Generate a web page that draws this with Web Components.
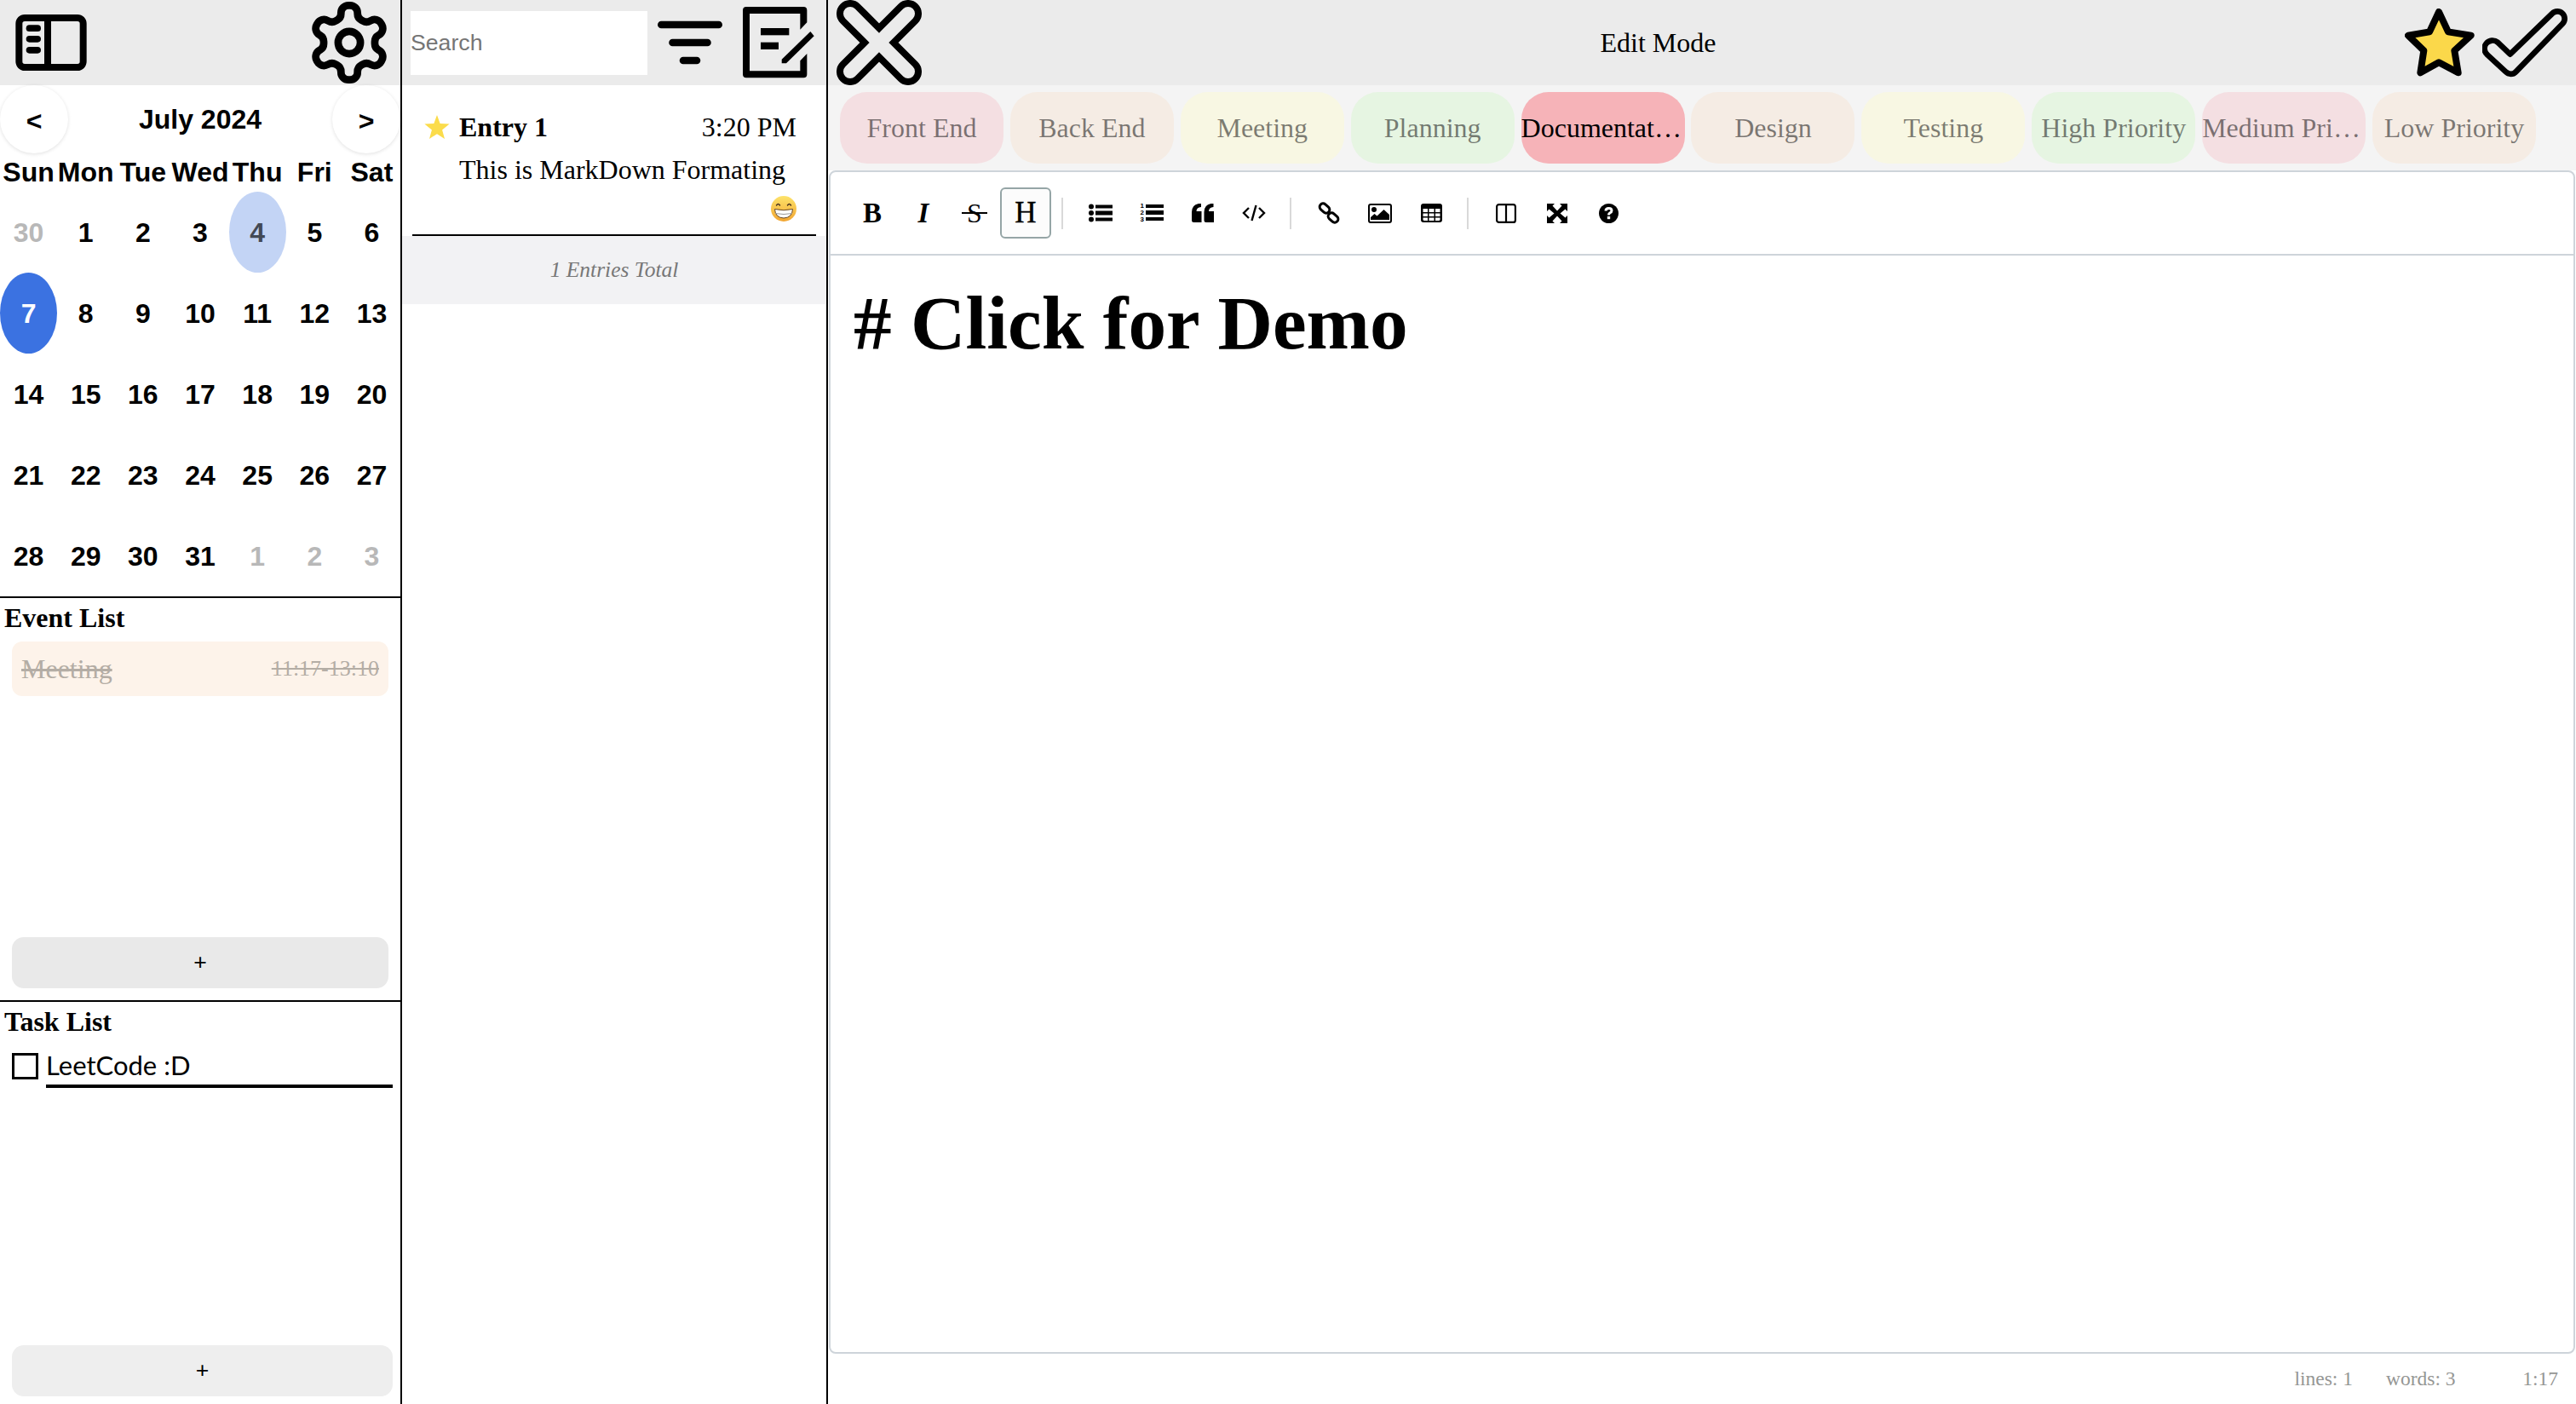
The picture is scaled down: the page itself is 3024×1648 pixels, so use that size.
<!DOCTYPE html>
<html>
<head>
<meta charset="utf-8">
<title>Journal</title>
<style>
  html, body { margin: 0; height: 100%; background: #fff; overflow: hidden; }
  body { font-family: "Liberation Serif", serif; font-size: 32px; color: #000; }
</style>
</head>
<body>
<app-shell>
  <left-panel slot="left">
    <cal-month></cal-month>
    <list-section slot="events" title-text="Event List" btn-width="442" btn-bg="#e9e9e9" btn-bottom="14">
      <event-row time="11:17-13:10">Meeting</event-row>
    </list-section>
    <list-section slot="tasks" title-text="Task List" btn-width="447" btn-bg="#eeeeee" btn-bottom="9">
      <task-row>LeetCode :D</task-row>
    </list-section>
  </left-panel>
  <entry-panel slot="mid">
    <entry-card name="Entry 1" time="3:20 PM">This is MarkDown Formating</entry-card>
  </entry-panel>
  <edit-panel slot="main"></edit-panel>
</app-shell>

<script>
function define(name, html, extra) {
  const template = document.createElement("template");
  template.innerHTML = html;
  class El extends HTMLElement {
    constructor() {
      super();
      this.attachShadow({ mode: "open" });
      this.shadowRoot.appendChild(template.content.cloneNode(true));
    }
    connectedCallback() {
      if (extra) extra(this, this.shadowRoot);
    }
  }
  customElements.define(name, El);
}

const sans = '"Liberation Sans", Arial, sans-serif';
const serif = '"Liberation Serif", serif';

define("app-shell", `
  <style>
    :host { display: grid; grid-template-columns: 472px 500px 1fr; height: 1648px; }
    ::slotted(*) { min-width: 0; }
  </style>
  <slot name="left"></slot><slot name="mid"></slot><slot name="main"></slot>
`);

define("left-panel", `
  <style>
    :host { display: flex; flex-direction: column; height: 1648px; border-right: 2px solid #000; box-sizing: border-box; }
    header { height: 100px; flex: none; background: #ebebeb; display: flex; justify-content: space-between; align-items: center; padding: 0 12px 0 18px; }
    svg { display: block; }
    .events { display: flex; height: 474px; flex: none; border-bottom: 2px solid #000; box-sizing: border-box; }
    .tasks { display: flex; flex: 1; min-height: 0; }
    ::slotted(list-section) { flex: 1; }
  </style>
  <header>
    <svg width="84" height="66" viewBox="55 50 250 198">
      <rect x="67" y="62" width="226" height="174" rx="20" fill="none" stroke="#000" stroke-width="24"/>
      <rect x="156" y="62" width="24" height="174" fill="#000"/>
      <rect x="92" y="87" width="52" height="23" rx="11.5"/>
      <rect x="92" y="125" width="52" height="23" rx="11.5"/>
      <rect x="92" y="164" width="52" height="23" rx="11.5"/>
    </svg>
    <svg width="96" height="96" viewBox="1 1 22 22" fill="none" stroke="#000" stroke-width="2" stroke-linecap="round" stroke-linejoin="round">
      <path d="M12.22 2h-.44a2 2 0 0 0-2 2v.18a2 2 0 0 1-1 1.73l-.43.25a2 2 0 0 1-2 0l-.15-.08a2 2 0 0 0-2.73.73l-.22.38a2 2 0 0 0 .73 2.73l.15.1a2 2 0 0 1 1 1.72v.51a2 2 0 0 1-1 1.74l-.15.09a2 2 0 0 0-.73 2.73l.22.38a2 2 0 0 0 2.73.73l.15-.08a2 2 0 0 1 2 0l.43.25a2 2 0 0 1 1 1.73V20a2 2 0 0 0 2 2h.44a2 2 0 0 0 2-2v-.18a2 2 0 0 1 1-1.73l.43-.25a2 2 0 0 1 2 0l.15.08a2 2 0 0 0 2.73-.73l.22-.39a2 2 0 0 0-.73-2.73l-.15-.08a2 2 0 0 1-1-1.74v-.5a2 2 0 0 1 1-1.74l.15-.09a2 2 0 0 0 .73-2.73l-.22-.38a2 2 0 0 0-2.73-.73l-.15.08a2 2 0 0 1-2 0l-.43-.25a2 2 0 0 1-1-1.73V4a2 2 0 0 0-2-2z"/>
      <circle cx="12" cy="12" r="3"/>
    </svg>
  </header>
  <slot></slot>
  <div class="events"><slot name="events"></slot></div>
  <div class="tasks"><slot name="tasks"></slot></div>
`);

define("cal-month", `
  <style>
    :host { display: block; height: 602px; flex: none; box-sizing: border-box; border-bottom: 2px solid #000; font: bold 32px ${sans}; }
    .nav { height: 80px; display: flex; justify-content: space-between; align-items: center; }
    .nav button { width: 80px; height: 80px; border: 0; border-radius: 50%; background: #fff; font: bold 32px ${sans}; color: #000; padding: 4px 0 0; box-shadow: 0 1px 4px rgba(0,0,0,.12); }
    .grid { display: grid; grid-template-columns: repeat(7, 1fr); grid-template-rows: 45px repeat(5, 95px); }
    .wd { display: flex; align-items: center; justify-content: center; white-space: nowrap; }
    .d { display: flex; align-items: center; justify-content: center; border-radius: 50%; padding-top: 1px; box-sizing: border-box; }
    .off { color: #b8b8b8; }
    .today { background: #3b72e1; color: #fff; }
    .picked { background: #c3d4f5; color: #434955; }
  </style>
  <div class="nav"><button>&lt;</button><span>July 2024</span><button>&gt;</button></div>
  <div class="grid"></div>
`, (el, root) => {
  const grid = root.querySelector(".grid");
  if (grid.children.length) return;
  ["Sun", "Mon", "Tue", "Wed", "Thu", "Fri", "Sat"].forEach((w) => {
    const c = document.createElement("div");
    c.className = "wd";
    c.textContent = w;
    grid.appendChild(c);
  });
  const days = [30];
  for (let i = 1; i <= 31; i++) days.push(i);
  days.push(1, 2, 3);
  days.forEach((n, i) => {
    const c = document.createElement("div");
    c.className = "d";
    if (i === 0 || i > 31) c.classList.add("off");
    if (i === 4) c.classList.add("picked");
    if (i === 7) c.classList.add("today");
    c.textContent = n;
    grid.appendChild(c);
  });
});

define("list-section", `
  <style>
    :host { display: flex; flex-direction: column; min-height: 0; }
    h3 { margin: 0; font: bold 32px/46px ${serif}; padding-left: 5px; flex: none; }
    .items { flex: 1; min-height: 0; }
    button { display: block; flex: none; margin-left: 14px; height: 60px; border: 0; border-radius: 14px; font: 26.67px ${sans}; color: #000; padding: 0 0 2px; }
  </style>
  <h3></h3>
  <div class="items"><slot></slot></div>
  <button>+</button>
`, (el, root) => {
  root.querySelector("h3").textContent = el.getAttribute("title-text");
  const b = root.querySelector("button");
  b.style.width = el.getAttribute("btn-width") + "px";
  b.style.background = el.getAttribute("btn-bg");
  b.style.marginBottom = el.getAttribute("btn-bottom") + "px";
});

define("event-row", `
  <style>
    :host { display: flex; justify-content: space-between; align-items: center; box-sizing: border-box; width: 442px; height: 64px; margin: 5px 0 0 14px; padding: 0 11px; background: #fdf3ea; border-radius: 12px; color: #b4ada5; text-decoration: line-through; }
    .t { font-size: 26px; text-decoration: line-through; }
  </style>
  <span><slot></slot></span><span class="t"></span>
`, (el, root) => {
  root.querySelector(".t").textContent = el.getAttribute("time");
});

define("task-row", `
  <style>
    :host { display: flex; align-items: flex-start; margin: 14px 0 0 14px; }
    .box { width: 31px; height: 31px; box-sizing: border-box; border: 3.5px solid #000; margin-right: 9px; flex: none; }
    .label { width: 407px; height: 39px; margin-top: -2px; border-bottom: 4px solid #000; font: 31px/32px Lato, "Open Sans", sans-serif; }
  </style>
  <div class="box"></div><div class="label"><slot></slot></div>
`);

define("entry-panel", `
  <style>
    :host { display: flex; flex-direction: column; height: 1648px; border-right: 2px solid #000; box-sizing: border-box; }
    header { height: 100px; flex: none; background: #ebebeb; display: flex; align-items: center; padding-left: 10px; }
    input { width: 278px; height: 75px; box-sizing: border-box; border: 0; padding: 0; background: #fff; font: 26.67px ${sans}; outline: 0; }
    input::placeholder { color: #757575; opacity: 1; }
    svg { display: block; flex: none; }
    .filter { margin-left: 12px; }
    .edit { margin-left: 24px; }
    .total { height: 80px; flex: none; background: #f2f2f4; color: #777; font: italic 25.5px/80px ${serif}; text-align: center; }
  </style>
  <header>
    <input placeholder="Search">
    <svg class="filter" width="76" height="52" viewBox="0 0 76 52" fill="none" stroke="#000" stroke-width="8.6" stroke-linecap="round">
      <path d="M4.3 5H71.7M17.5 26H58.5M30 47H46"/>
    </svg>
    <svg class="edit" width="84" height="84" viewBox="337 25 252 252">
      <path d="M349 25H551Q563 25 563 37V80L539 105V49H361V251H539V215L563 190V263Q563 275 551 275H349Q337 275 337 263V37Q337 25 349 25Z"/>
      <rect x="400" y="100" width="100" height="25"/>
      <rect x="400" y="150" width="63" height="25"/>
      <path d="M474 210L575 112L588 128L490 224H474Z"/>
    </svg>
  </header>
  <slot></slot>
  <div class="total">1 Entries Total</div>
`);

define("entry-card", `
  <style>
    :host { display: block; flex: none; box-sizing: border-box; height: 177px; margin: 0 12px; padding: 24px 23px 0 14px; border-bottom: 2px solid #000; }
    .top { display: flex; align-items: center; height: 50px; }
    .star { width: 30px; height: 28px; margin-right: 11px; flex: none; }
    b { flex: 1; }
    .body { padding-left: 41px; line-height: 50px; white-space: nowrap; }
    .emoji { display: block; margin: 6px 0 0 auto; }
  </style>
  <div class="top">
    <svg class="star" viewBox="0 0 24 23"><path fill="#fbdc4b" d="M12 0l3 8.200 9 .5-7 5.600 2.400 8.700L12 18.200 4.600 23 7 14.300 0 8.700l9-.5z"/></svg>
    <b class="name"></b><span class="time"></span>
  </div>
  <div class="body"><slot></slot></div>
  <svg class="emoji" width="30" height="30" viewBox="0 0 30 30">
    <defs><linearGradient id="fc" x1="0" y1="0" x2="0" y2="1"><stop offset="0" stop-color="#fde36a"/><stop offset="1" stop-color="#f2a531"/></linearGradient></defs>
    <circle cx="15" cy="15" r="15" fill="url(#fc)"/>
    <path d="M6.500 11q2-3 4 0M19.500 11q2-3 4 0" fill="none" stroke="#4a3420" stroke-width="1.500" stroke-linecap="round"/>
    <path d="M4.500 15.500Q15 18 25.500 15.500Q25 25.500 15 26Q5 25.500 4.500 15.500Z" fill="#fff" stroke="#6b4a25" stroke-width="1"/>
    <path d="M5 20.500Q15 22.500 25 20.500" fill="none" stroke="#9a9a9a" stroke-width="1"/>
  </svg>
`, (el, root) => {
  root.querySelector(".name").textContent = el.getAttribute("name");
  root.querySelector(".time").textContent = el.getAttribute("time");
});

define("tag-pill", `
  <style>
    :host { display: block; flex: none; box-sizing: border-box; width: 192px; height: 84px; border-radius: 32px; background: var(--c); color: rgba(0,0,0,.5); font: 32px/84px ${serif}; text-align: center; white-space: nowrap; overflow: hidden; text-overflow: ellipsis; }
    :host([active]) { color: #000; }
  </style>
  <slot></slot>
`);

define("md-toolbar", `
  <style>
    :host { display: flex; align-items: center; height: 98px; flex: none; box-sizing: border-box; padding-left: 19px; border-bottom: 2px solid #ced4da; }
    .b { width: 60px; height: 60px; box-sizing: border-box; display: flex; align-items: center; justify-content: center; flex: none; font-family: ${serif}; border: 2px solid transparent; border-radius: 6px; }
    .b.on { border-color: #95a5a6; background: #fcfcfc; font-size: 35px; -webkit-text-stroke: .4px #000; }
    .bold { font-size: 33px; font-weight: bold; }
    .ital { font-size: 33px; font-weight: bold; font-style: italic; }
    .sep { width: 2px; height: 37px; background: #d9d9d9; margin: 0 14px 0 12px; flex: none; }
    svg { display: block; }
    .nums { font-family: ${sans}; font-size: 8px; font-weight: bold; }
    .st { position: relative; font-size: 32px; }
    .st::after { content: ""; position: absolute; left: -6px; right: -6px; top: 17px; height: 2px; background: #000; }
  </style>
  <div class="b bold">B</div>
  <div class="b ital">I</div>
  <div class="b"><span class="st">S</span></div>
  <div class="b on">H</div>
  <div class="sep"></div>
  <div class="b"><svg width="28" height="22" viewBox="0 0 28 22">
    <circle cx="3" cy="3.500" r="3"/><circle cx="3" cy="11" r="3"/><circle cx="3" cy="18.500" r="3"/>
    <rect x="8" y="1.500" width="20" height="4"/><rect x="8" y="8.500" width="20" height="5"/><rect x="8" y="16.500" width="20" height="4"/>
  </svg></div>
  <div class="b"><svg class="nums" width="28" height="28" viewBox="0 0 28 28">
    <text x="0.500" y="7.500">1</text><text x="0.500" y="15.800">2</text><text x="0.500" y="24.100">3</text>
    <rect x="7" y="4" width="21" height="4"/><rect x="7" y="11" width="21" height="5"/><rect x="7" y="19" width="21" height="4"/>
  </svg></div>
  <div class="b"><svg width="26" height="22" viewBox="0 0 26 22">
    <path d="M11.500 22H2.500Q0 22 0 19.500V10Q0 1.500 8 0H11V4Q5.500 4.500 5.500 9H11.500Z"/>
    <path d="M26 22H17Q14.500 22 14.500 19.500V10Q14.500 1.500 22.500 0H25.500V4Q20 4.500 20 9H26Z"/>
  </svg></div>
  <div class="b"><svg width="28" height="20" viewBox="0 0 28 20" fill="none" stroke="#000" stroke-width="2.400">
    <path d="M8 4L2 10L8 16M20 4L26 10L20 16M16.500 1L11.500 19"/>
  </svg></div>
  <div class="sep"></div>
  <div class="b"><svg width="26" height="26" viewBox="0 0 26 26" fill="none" stroke="#000" stroke-width="3">
    <rect x="1.500" y="3.500" width="13" height="8" rx="4" transform="rotate(42 8 7.500)"/>
    <rect x="11.500" y="14.500" width="13" height="8" rx="4" transform="rotate(42 18 18.500)"/>
  </svg></div>
  <div class="b"><svg width="28" height="23" viewBox="0 0 28 23">
    <rect x="1" y="1" width="26" height="21" rx="2" fill="none" stroke="#000" stroke-width="2"/>
    <circle cx="7" cy="7" r="3"/>
    <path d="M3 19V16L7.500 12L10.500 14.500L18.500 7L25 13V19Z"/>
  </svg></div>
  <div class="b"><svg width="25" height="22" viewBox="0 0 25 22">
    <rect x="0" y="0" width="25" height="22" rx="3"/>
    <path d="M2.500 6H8V10H2.500ZM9.500 6H15.500V10H9.500ZM17 6H22.500V10H17ZM2.500 11.500H8V15H2.500ZM9.500 11.500H15.500V15H9.500ZM17 11.500H22.500V15H17ZM2.500 16.500H8V20H3.500L2.500 19ZM9.500 16.500H15.500V20H9.500ZM17 16.500H22.500V19L21.500 20H17Z" fill="#fff"/>
  </svg></div>
  <div class="sep"></div>
  <div class="b"><svg width="24" height="23" viewBox="0 0 24 23" fill="none" stroke="#000" stroke-width="2.200">
    <rect x="1.100" y="1.100" width="21.800" height="20.800" rx="2.500"/><path d="M12 1V22"/>
  </svg></div>
  <div class="b"><svg width="24" height="23" viewBox="0 0 24 23">
    <path d="M0 0H9L6.500 2.500L12 8.500L17.500 2.500L15 0H24V9L21.500 6.500L15.500 11.500L21.500 16.500L24 14V23H15L17.500 20.500L12 14.500L6.500 20.500L9 23H0V14L2.500 16.500L8.500 11.500L2.500 6.500L0 9Z"/>
  </svg></div>
  <div class="b"><svg width="23" height="23" viewBox="0 0 23 23">
    <circle cx="11.500" cy="11.500" r="11.500"/>
    <path d="M8 8.500Q8 5.500 11.500 5.500Q15 5.500 15 8.300Q15 10 12.800 11Q11.500 11.700 11.500 13.500" fill="none" stroke="#fff" stroke-width="3"/>
    <rect x="9.800" y="15" width="3.400" height="3.200" fill="#fff"/>
  </svg></div>
`);

define("edit-panel", `
  <style>
    :host { display: flex; flex-direction: column; height: 1648px; }
    header { height: 100px; flex: none; background: #ebebeb; display: flex; align-items: center; padding: 0 10px 0 10px; }
    h2 { flex: 1; margin: 0; font: 32px ${serif}; text-align: center; padding-right: 12px; }
    svg { display: block; flex: none; }
    .check { margin-left: 9px; }
    .tags { height: 100px; flex: none; box-sizing: border-box; background: #f4f4f4; display: flex; align-items: center; gap: 7.9px; padding: 0 0 0 14px; }
    .editor { flex: 1; min-height: 0; display: flex; flex-direction: column; margin: 0 1px 0 1px; border: 2px solid #ced4da; border-radius: 8px; background: #fff; box-sizing: border-box; }
    .text { flex: 1; padding: 25px 0 0 27px; font: bold 89.3px/1.2 ${serif}; }
    .status { height: 59px; flex: none; display: flex; align-items: center; justify-content: flex-end; padding-right: 21px; color: #959694; font: 23.5px ${serif}; }
    .words { margin-left: 39px; }
    .pos { margin-left: 78.6px; }
  </style>
  <header>
    <svg width="100" height="100" viewBox="0 0 100 100" fill="none" stroke="#000" stroke-width="8">
      <path d="M50 33L75.500 7.500A12 12 0 0 1 92.500 24.500L67 50L92.500 75.500A12 12 0 0 1 75.500 92.500L50 67L24.500 92.500A12 12 0 0 1 7.500 75.500L33 50L7.500 24.500A12 12 0 0 1 24.500 7.500Z"/>
    </svg>
    <h2>Edit Mode</h2>
    <svg width="82" height="80" viewBox="40 30 246 240">
      <path d="M160 42L193 112L273 125L215 178L228 256L160 220L95 256L107 178L52 125L127 112Z" fill="#fbd84a" stroke="#000" stroke-width="24" stroke-linejoin="round"/>
    </svg>
    <svg class="check" width="100" height="81" viewBox="312 27 300 243" fill="none" stroke="#000" stroke-width="20">
      <path d="M410 188L558 45A24 24 0 0 1 595 80L430 250A24 24 0 0 1 395 250L330 190A24 24 0 0 1 366 146Z" stroke-linejoin="round"/>
    </svg>
  </header>
  <div class="tags">
    <tag-pill style="--c:#f4dfe2">Front End</tag-pill>
    <tag-pill style="--c:#f5ece4">Back End</tag-pill>
    <tag-pill style="--c:#f8f7e3">Meeting</tag-pill>
    <tag-pill style="--c:#e6f5e2">Planning</tag-pill>
    <tag-pill style="--c:#f6b3b8" active>Documentation</tag-pill>
    <tag-pill style="--c:#f5ece4">Design</tag-pill>
    <tag-pill style="--c:#f8f7e3">Testing</tag-pill>
    <tag-pill style="--c:#e6f5e2">High Priority</tag-pill>
    <tag-pill style="--c:#f4dfe2">Medium Priority</tag-pill>
    <tag-pill style="--c:#f5ece4">Low Priority</tag-pill>
  </div>
  <div class="editor">
    <md-toolbar></md-toolbar>
    <div class="text"># Click for Demo</div>
  </div>
  <div class="status"><span>lines: 1</span><span class="words">words: 3</span><span class="pos">1:17</span></div>
`);
</script>
</body>
</html>
